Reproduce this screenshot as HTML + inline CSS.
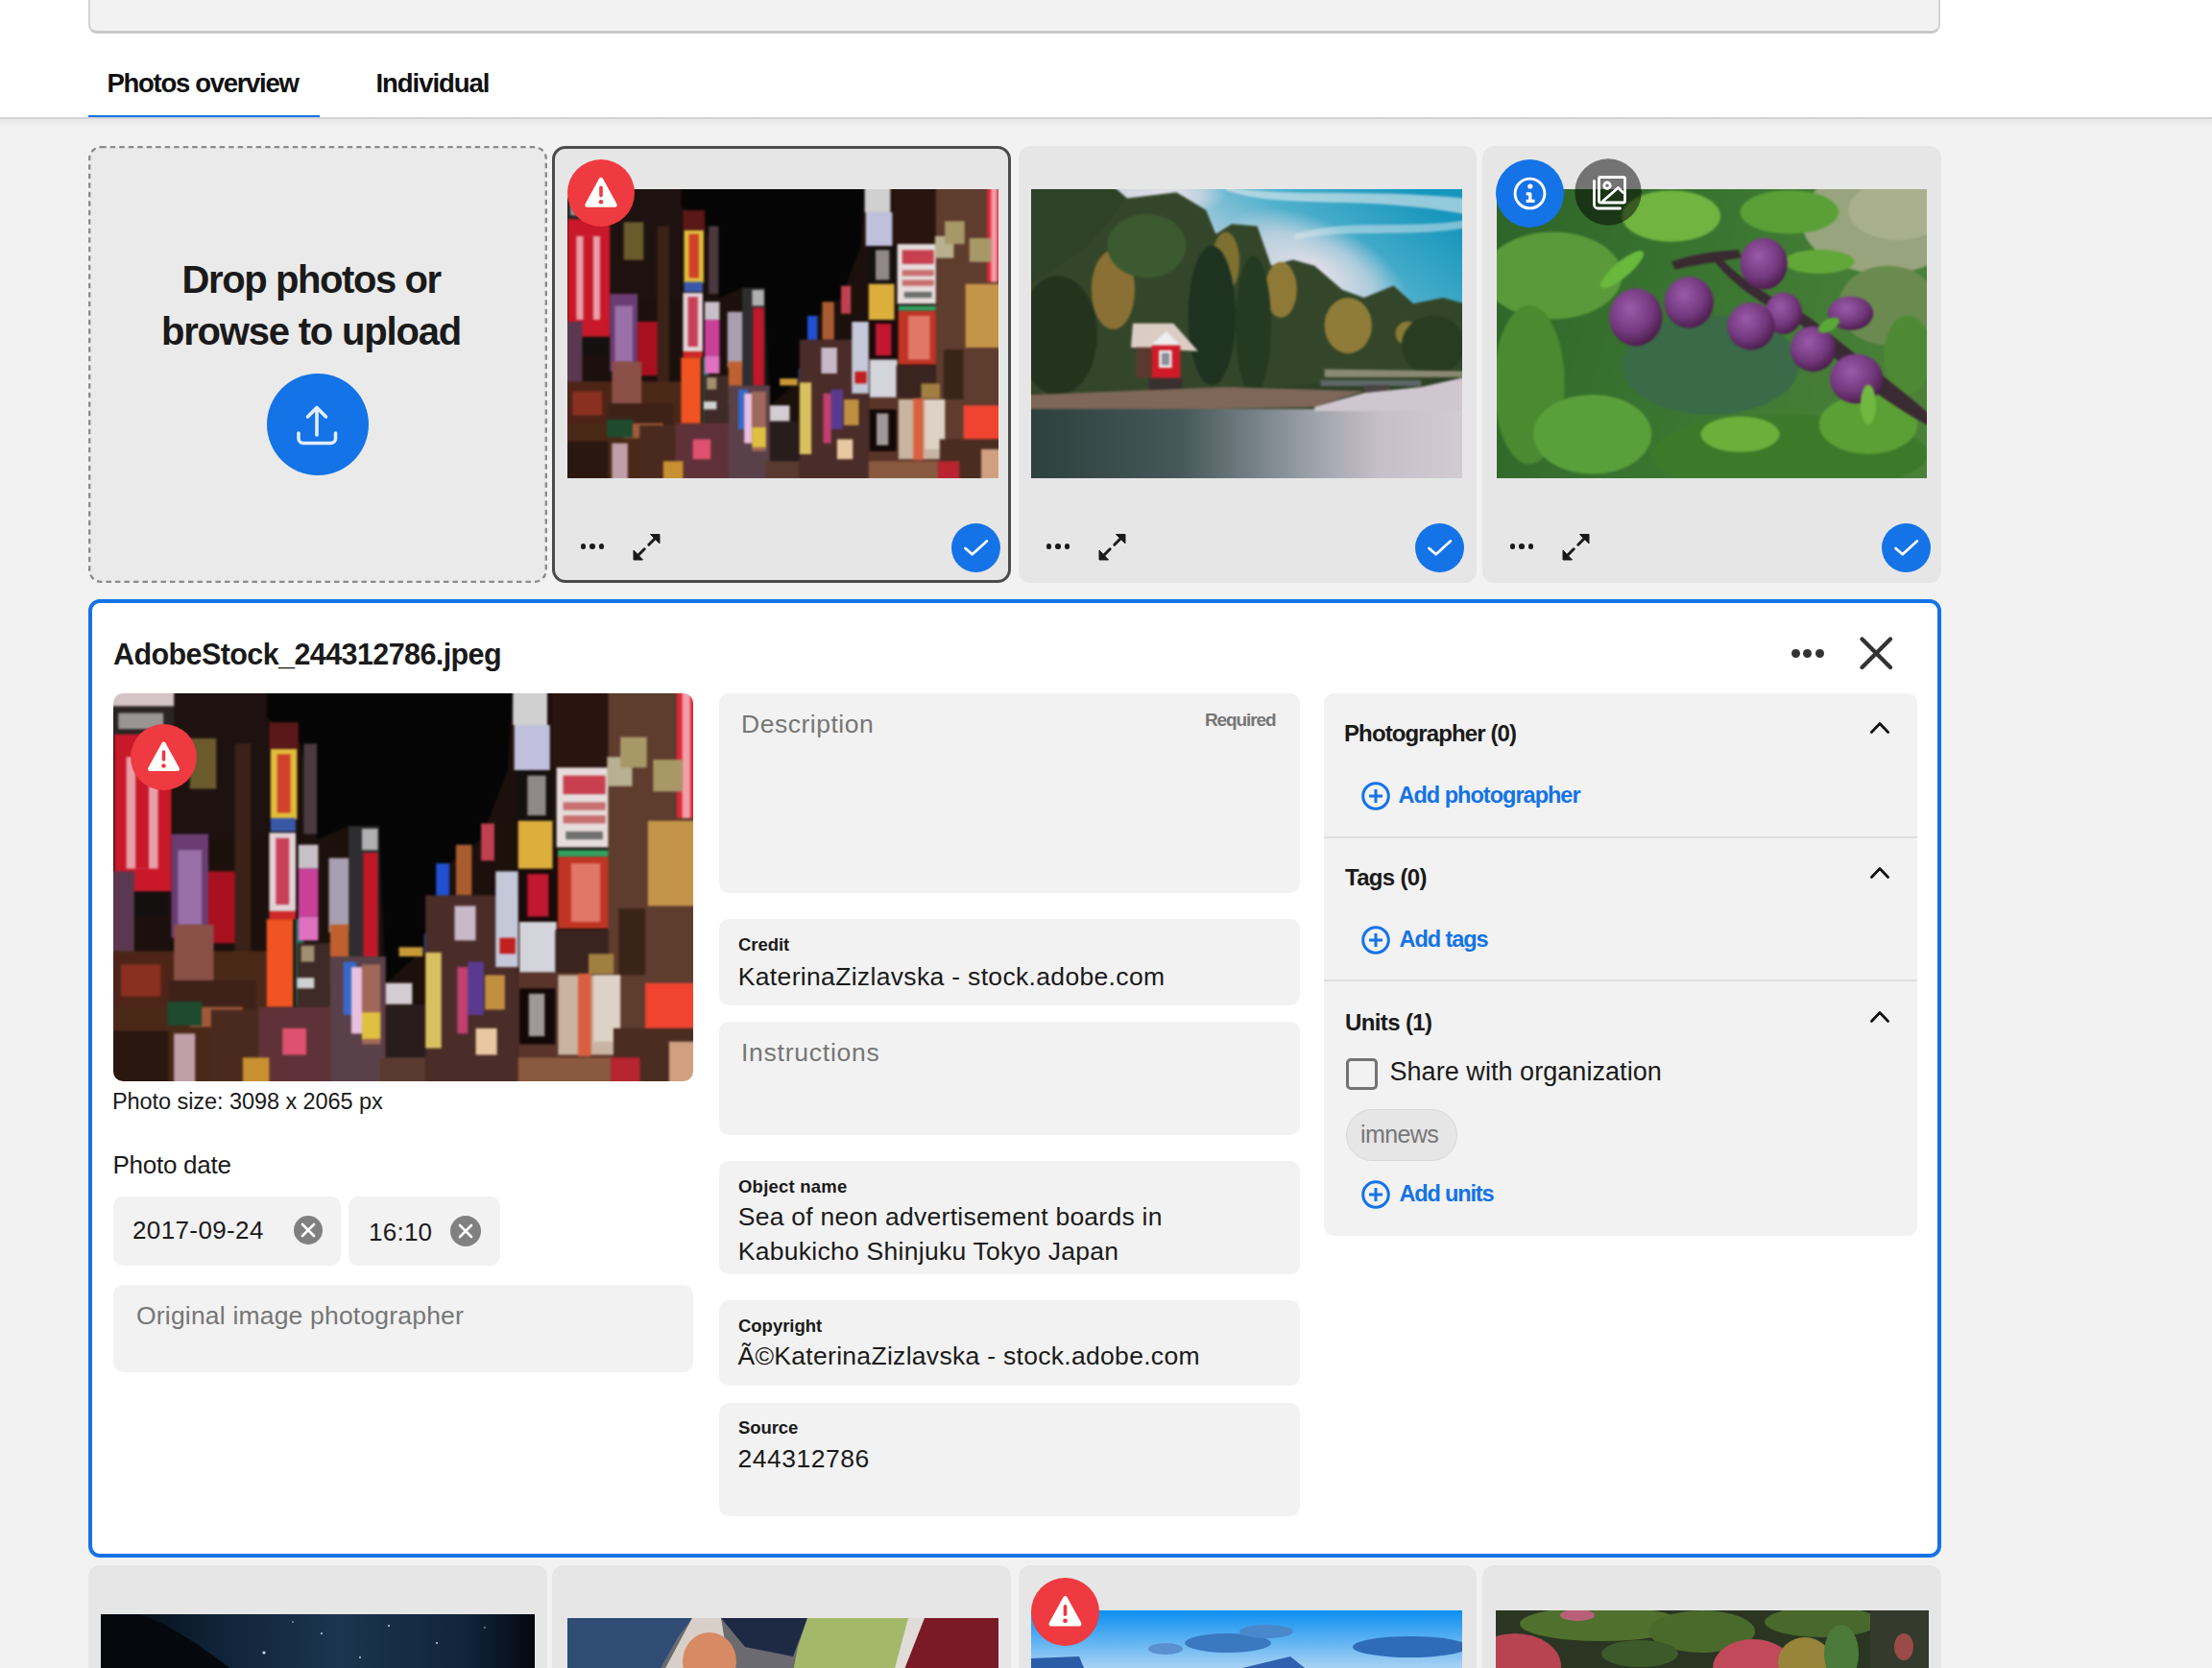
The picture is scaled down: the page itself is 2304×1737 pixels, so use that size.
<!DOCTYPE html>
<html>
<head>
<meta charset="utf-8">
<style>
html,body{margin:0;padding:0}
body{width:2304px;height:1737px;overflow:hidden;position:relative;background:#f2f2f2;font-family:"Liberation Sans",sans-serif;color:#1a1a1a}
.a{position:absolute}
.t{position:absolute;line-height:1;white-space:nowrap}
svg{display:block}
.card{position:absolute;background:#e6e6e6;border-radius:12px;box-sizing:border-box}
.photo{position:absolute;overflow:hidden}
.circ{position:absolute;border-radius:50%}
.fld{position:absolute;background:#f2f2f2}
</style>
</head>
<body>
<svg width="0" height="0" style="position:absolute"><defs>
<g id="tokyo">
<rect width="2212" height="1480" fill="#1c100c"/>
<polygon points="590,0 1520,0 1500,300 1400,560 1280,650 1200,960 1040,1100 1015,520 900,510 780,560 720,200 590,100" fill="#050505"/>
<rect x="240" y="0" width="350" height="560" fill="#1e1210"/>
<rect x="0" y="0" width="240" height="60" fill="#d4c4c6"/>
<rect x="0" y="60" width="240" height="110" fill="#2c2424"/>
<rect x="30" y="85" width="170" height="60" fill="#9a9494"/>
<rect x="15" y="165" width="215" height="590" fill="#c8182a"/>
<rect x="60" y="250" width="120" height="420" fill="#e8a0a8"/>
<rect x="95" y="250" width="50" height="420" fill="#c8182a"/>
<rect x="85" y="760" width="130" height="90" fill="#141010"/>
<rect x="0" y="680" width="90" height="330" fill="#5a3850"/>
<rect x="230" y="540" width="140" height="390" fill="#6a3c72"/>
<rect x="255" y="600" width="90" height="280" fill="#9a70a8"/>
<rect x="370" y="680" width="125" height="270" fill="#a81020"/>
<rect x="300" y="180" width="100" height="190" fill="#6a5a2c"/>
<rect x="470" y="200" width="60" height="800" fill="#3a2218"/>
<rect x="0" y="980" width="590" height="500" fill="#4a2818"/>
<rect x="0" y="990" width="235" height="200" fill="#4e2418"/><rect x="40" y="1030" width="150" height="120" fill="#8a3020"/>
<rect x="240" y="880" width="150" height="210" fill="#8a5048"/>
<rect x="220" y="1090" width="330" height="125" fill="#3e2218"/><rect x="300" y="1190" width="200" height="75" fill="#a05a3a"/>
<rect x="215" y="1170" width="130" height="90" fill="#1e4a2e"/>
<rect x="0" y="1280" width="220" height="200" fill="#2a1810"/>
<rect x="240" y="1290" width="80" height="190" fill="#c0a0a8"/>
<rect x="380" y="1200" width="180" height="280" fill="#4a2a1e"/>
<rect x="605" y="220" width="100" height="265" fill="#e0bc3a"/>
<rect x="630" y="240" width="50" height="220" fill="#d0402a"/>
<rect x="605" y="480" width="95" height="50" fill="#3a58a8"/>
<rect x="600" y="535" width="100" height="295" fill="#e2d2d6"/>
<rect x="625" y="555" width="50" height="250" fill="#c84058"/>
<rect x="600" y="830" width="100" height="30" fill="#d02828"/>
<rect x="590" y="860" width="100" height="330" fill="#f05422"/>
<rect x="700" y="860" width="30" height="330" fill="#207060"/>
<rect x="600" y="120" width="110" height="100" fill="#5a1818"/>
<rect x="710" y="580" width="75" height="90" fill="#c8c0c8"/>
<rect x="710" y="670" width="75" height="180" fill="#c84098"/>
<rect x="710" y="850" width="75" height="90" fill="#e070c0"/>
<rect x="730" y="200" width="50" height="340" fill="#4a3a40"/>
<rect x="705" y="950" width="125" height="250" fill="#3e2a26"/><rect x="705" y="1080" width="65" height="40" fill="#d0d0d0"/><rect x="720" y="960" width="50" height="60" fill="#a09070"/>
<rect x="560" y="1190" width="280" height="290" fill="#5e3238"/>
<rect x="650" y="1270" width="90" height="100" fill="#e05070"/>
<rect x="500" y="1380" width="100" height="100" fill="#c89030"/>
<rect x="825" y="630" width="85" height="280" fill="#a8a0b0"/>
<rect x="900" y="510" width="115" height="520" fill="#2e2e30"/>
<rect x="955" y="610" width="55" height="390" fill="#c01828"/>
<rect x="950" y="520" width="60" height="80" fill="#b0b0b0"/>
<rect x="830" y="880" width="70" height="220" fill="#c06030"/>
<rect x="830" y="1000" width="210" height="480" fill="#5a4048"/>
<rect x="880" y="1020" width="50" height="200" fill="#3868c8"/>
<rect x="910" y="1040" width="40" height="250" fill="#e8c0e0"/>
<rect x="950" y="1030" width="70" height="300" fill="#a06858"/>
<rect x="950" y="1210" width="70" height="100" fill="#e0c040"/>
<rect x="1040" y="1100" width="100" height="80" fill="#d4ccd0"/>
<rect x="1040" y="1180" width="150" height="300" fill="#281c1c"/>
<rect x="1020" y="1380" width="170" height="100" fill="#5a3a30"/>
<rect x="1090" y="965" width="90" height="35" fill="#c89838"/>
<rect x="1185" y="915" width="50" height="70" fill="#2e4e90"/>
<rect x="1230" y="650" width="50" height="220" fill="#2050d0"/>
<rect x="1305" y="580" width="60" height="190" fill="#a85c30"/>
<rect x="1400" y="500" width="50" height="140" fill="#c04050"/>
<rect x="1190" y="770" width="350" height="710" fill="#4a2c28"/>
<rect x="1190" y="985" width="60" height="360" fill="#d8c060"/>
<rect x="1300" y="810" width="80" height="130" fill="#c8b8c8"/>
<rect x="1350" y="1020" width="60" height="200" fill="#5a3a90"/>
<rect x="1310" y="1040" width="40" height="250" fill="#c04070"/>
<rect x="1415" y="1070" width="75" height="130" fill="#c09040"/>
<rect x="1380" y="1270" width="80" height="100" fill="#e8c8a0"/>
<rect x="1455" y="680" width="85" height="360" fill="#c4c8d8"/>
<rect x="1470" y="930" width="60" height="60" fill="#c02020"/>
<rect x="1520" y="0" width="130" height="130" fill="#d0d0d0"/>
<rect x="1525" y="130" width="135" height="170" fill="#c0c0dc"/>
<rect x="1530" y="300" width="140" height="190" fill="#141010"/>
<rect x="1575" y="320" width="70" height="150" fill="#908888"/>
<rect x="1540" y="490" width="130" height="180" fill="#dcae3c"/>
<rect x="1545" y="675" width="135" height="195" fill="#1a0a0a"/>
<rect x="1575" y="690" width="80" height="160" fill="#c01830"/>
<rect x="1545" y="870" width="140" height="190" fill="#d4d4dc"/>
<rect x="1670" y="0" width="210" height="290" fill="#2a1410"/>
<rect x="1685" y="290" width="205" height="300" fill="#e6dcdc"/>
<rect x="1710" y="320" width="160" height="70" fill="#c84050"/><rect x="1710" y="420" width="160" height="30" fill="#c87070"/><rect x="1710" y="470" width="160" height="30" fill="#c87070"/><rect x="1720" y="530" width="140" height="30" fill="#707070"/>
<rect x="1690" y="600" width="205" height="25" fill="#30a060"/>
<rect x="1690" y="625" width="215" height="270" fill="#c03424"/>
<rect x="1740" y="650" width="110" height="220" fill="#e07868"/>
<rect x="1880" y="0" width="332" height="1480" fill="#5e3c2e"/>
<rect x="2140" y="0" width="72" height="480" fill="#e02838"/>
<rect x="2160" y="0" width="30" height="480" fill="#f0a0a8"/>
<rect x="1876" y="250" width="95" height="110" fill="#b8b090"/><rect x="1926" y="175" width="100" height="115" fill="#a89868"/>
<rect x="2050" y="260" width="110" height="120" fill="#a89868"/>
<rect x="2030" y="490" width="182" height="320" fill="#c49448"/>
<rect x="1920" y="820" width="100" height="250" fill="#3a2418"/>
<rect x="1680" y="900" width="200" height="160" fill="#3a2420"/>
<rect x="1540" y="1060" width="380" height="420" fill="#5a3428"/>
<rect x="1545" y="1120" width="135" height="210" fill="#120808"/>
<rect x="1580" y="1140" width="60" height="160" fill="#a09898"/>
<rect x="1691" y="1070" width="235" height="300" fill="#c8b4a0"/><rect x="1766" y="1065" width="50" height="310" fill="#d86040"/><rect x="1826" y="1070" width="100" height="250" fill="#ddd2c6"/>
<rect x="1806" y="990" width="95" height="75" fill="#a08040"/>
<rect x="2020" y="1100" width="192" height="170" fill="#f04430"/>
<rect x="1900" y="1270" width="312" height="210" fill="#4a2c20"/>
<rect x="1890" y="1380" width="110" height="100" fill="#b82430"/>
<rect x="2110" y="1320" width="102" height="160" fill="#d0a080"/>
<rect x="1540" y="1380" width="350" height="100" fill="#8a5a40"/>
</g>
<g id="lake">
<defs>
<linearGradient id="lsky" x1="1" y1="0.35" x2="0.3" y2="0.6">
<stop offset="0" stop-color="#1696bd"/><stop offset="0.45" stop-color="#4fb0cc"/><stop offset="1" stop-color="#eadfe8"/>
</linearGradient>
<linearGradient id="lwat" x1="0" y1="0" x2="1" y2="0">
<stop offset="0" stop-color="#2c403c"/><stop offset="0.35" stop-color="#46585a"/><stop offset="0.65" stop-color="#9ca2aa"/><stop offset="0.8" stop-color="#c6bec8"/><stop offset="1" stop-color="#d4ccd4"/>
</linearGradient>
<radialGradient id="lpink" cx="0.5" cy="0.5" r="0.5"><stop offset="0" stop-color="#ece2ea" stop-opacity="0.95"/><stop offset="0.6" stop-color="#e6dde6" stop-opacity="0.6"/><stop offset="1" stop-color="#e6dde6" stop-opacity="0"/></radialGradient>
</defs>
<rect width="2212" height="1483" fill="#2e4026"/>
<rect width="2212" height="620" fill="url(#lsky)"/>
<ellipse cx="1450" cy="430" rx="520" ry="260" fill="url(#lpink)" transform="rotate(25 1450 430)"/>
<ellipse cx="700" cy="40" rx="300" ry="120" fill="url(#lpink)"/>
<path d="M1000,20 C1300,120 1700,40 2212,140 L2212,60 C1700,10 1300,60 1000,0Z" fill="#e8ecf0" opacity="0.6"/>
<path d="M1350,240 C1600,160 1900,220 2212,170 L2212,210 C1900,260 1600,210 1350,270Z" fill="#e0eaf0" opacity="0.5"/>
<polygon points="0,0 430,0 500,60 750,30 900,120 950,240 1030,190 1160,200 1230,400 1340,370 1450,400 1590,520 1700,560 1850,500 1950,590 2100,560 2212,590 2212,960 0,1060" fill="#34462a"/>
<polygon points="0,0 430,0 500,60 300,300 0,500" fill="#2e4228"/>
<ellipse cx="430" cy="520" rx="110" ry="200" fill="#8a7034"/>
<ellipse cx="1000" cy="380" rx="70" ry="150" fill="#7e7030"/>
<ellipse cx="1280" cy="520" rx="80" ry="140" fill="#8e7a36"/>
<ellipse cx="1620" cy="700" rx="120" ry="140" fill="#8e7c38"/>
<ellipse cx="1920" cy="740" rx="60" ry="60" fill="#8a7a34"/>
<ellipse cx="600" cy="300" rx="200" ry="160" fill="#3c5a30"/>
<ellipse cx="150" cy="750" rx="200" ry="300" fill="#22341e"/>
<ellipse cx="930" cy="650" rx="120" ry="350" fill="#1e3220"/>
<ellipse cx="1140" cy="700" rx="90" ry="350" fill="#243a22"/>
<ellipse cx="2050" cy="800" rx="160" ry="150" fill="#283c22"/>
<polygon points="1500,920 2212,930 2212,960 1500,960" fill="#8a8a72"/>
<polygon points="530,690 735,690 860,830 520,810" fill="#dccdc4"/>
<polygon points="620,800 700,730 770,800" fill="#eeeeee"/>
<rect x="545" y="810" width="80" height="155" fill="#5a3a30"/>
<rect x="625" y="800" width="145" height="165" fill="#d01a28"/>
<rect x="662" y="825" width="65" height="88" fill="#f0f0f0"/>
<rect x="675" y="838" width="40" height="62" fill="#8a9098"/>
<rect x="610" y="965" width="170" height="70" fill="#3a3030"/>
<polygon points="0,1050 1000,1010 1700,1030 1450,1110 0,1140" fill="#7e6658"/>
<rect x="1480" y="975" width="510" height="30" fill="#5e6668"/>
<rect x="1700" y="1000" width="130" height="50" fill="#4a4444"/>
<rect x="0" y="1120" width="2212" height="363" fill="url(#lwat)"/>
<polygon points="1450,1110 1700,1040 1990,1010 2212,960 2212,1130 1450,1130" fill="#cfc6d0"/>
</g>
<g id="plum">
<defs>
<radialGradient id="pg" cx="0.4" cy="0.35" r="0.7"><stop offset="0" stop-color="#9a5aa8"/><stop offset="0.6" stop-color="#73387e"/><stop offset="1" stop-color="#461a44"/></radialGradient>
<linearGradient id="pbg" x1="0" y1="0" x2="1" y2="0.2"><stop offset="0" stop-color="#2e6428"/><stop offset="0.6" stop-color="#3c7832"/><stop offset="1" stop-color="#4a8038"/></linearGradient>
</defs>
<rect width="2212" height="1486" fill="url(#pbg)"/>
<ellipse cx="1980" cy="170" rx="420" ry="270" fill="#98a47e"/><ellipse cx="2050" cy="120" rx="250" ry="150" fill="#aab08e"/>
<ellipse cx="2000" cy="600" rx="250" ry="200" fill="#6a8a50"/>
<ellipse cx="300" cy="450" rx="350" ry="220" fill="#5a9a3a"/>
<ellipse cx="180" cy="1000" rx="180" ry="400" fill="#4a8a30"/>
<ellipse cx="1100" cy="900" rx="450" ry="250" fill="#3a6a48"/>
<ellipse cx="1500" cy="1350" rx="700" ry="200" fill="#3c7a2a"/>
<ellipse cx="500" cy="1250" rx="300" ry="200" fill="#5aa03a"/>
<ellipse cx="900" cy="150" rx="250" ry="130" fill="#72b440"/>
<ellipse cx="1500" cy="130" rx="250" ry="110" fill="#5aa036"/>
<ellipse cx="1650" cy="380" rx="180" ry="60" fill="#62a838"/>
<ellipse cx="1900" cy="1200" rx="250" ry="150" fill="#5aa034"/><ellipse cx="1250" cy="1250" rx="200" ry="90" fill="#6ab03a"/><ellipse cx="2100" cy="850" rx="120" ry="200" fill="#4e8a34"/>
<path d="M900,380 C1050,330 1150,330 1240,320 L1260,360 C1150,380 1050,390 920,420Z" fill="#3a2a30"/>
<path d="M1150,360 C1300,520 1500,600 1600,660 C1900,900 2100,1050 2212,1150 L2212,1210 C2000,1100 1800,950 1560,700 C1450,640 1250,540 1120,380Z" fill="#3a2a34"/>
<ellipse cx="720" cy="660" rx="135" ry="145" fill="url(#pg)"/>
<ellipse cx="990" cy="585" rx="125" ry="130" fill="url(#pg)"/>
<ellipse cx="1370" cy="390" rx="120" ry="130" fill="url(#pg)"/>
<ellipse cx="1470" cy="640" rx="95" ry="105" fill="url(#pg)"/>
<ellipse cx="1305" cy="705" rx="120" ry="120" fill="url(#pg)"/>
<ellipse cx="1620" cy="820" rx="115" ry="115" fill="url(#pg)"/>
<ellipse cx="1810" cy="640" rx="115" ry="85" fill="url(#pg)"/>
<ellipse cx="1840" cy="970" rx="135" ry="125" fill="url(#pg)"/>
<ellipse cx="1700" cy="700" rx="60" ry="30" fill="#5aa838" transform="rotate(-30 1700 700)"/>
<ellipse cx="650" cy="420" rx="140" ry="40" fill="#6ab83c" transform="rotate(-40 650 420)"/>
<ellipse cx="1900" cy="1100" rx="40" ry="100" fill="#70b840"/>
</g>

</defs></svg>
<div class="a" style="left:0;top:0;width:2304px;height:122px;background:#fff;border-bottom:2px solid #d3d3d3"></div>
<div class="a" style="left:0;top:124px;width:2304px;height:8px;background:linear-gradient(#e8e8e8,#f2f2f2)"></div>
<div class="a" style="left:92px;top:-12px;width:1925px;height:44px;background:#f2f2f2;border:2px solid #d2d2d2;border-top:0;border-bottom:3px solid #c8c8c8;border-radius:0 0 9px 9px"></div>
<div class="t" style="left:111.5px;top:73.02px;font-size:27.5px;font-weight:700;color:#111;letter-spacing:-1.3px;">Photos overview</div>
<div class="t" style="left:391.5px;top:73.02px;font-size:27.5px;font-weight:700;color:#111;letter-spacing:-1.05px;">Individual</div>
<div class="a" style="left:92px;top:120px;width:241px;height:2px;background:#1473e6"></div>
<svg class="a" style="left:92px;top:152px" width="478" height="455"><rect x="1.2" y="1.2" width="475.6" height="452.6" rx="12" ry="12" fill="#eaeaea" stroke="#8a8a8a" stroke-width="2.3" stroke-dasharray="5.5 4"/></svg>
<div class="t" style="left:189.5px;top:270.64px;font-size:40px;font-weight:700;color:#1a1a1a;letter-spacing:-1.4px;">Drop photos or</div>
<div class="t" style="left:168px;top:325.14px;font-size:40px;font-weight:700;color:#1a1a1a;letter-spacing:-1.2px;">browse to upload</div>
<div class="circ" style="left:278px;top:389px;width:106px;height:106px;background:#1473e6"></div>
<svg class="a" style="left:278px;top:389px" width="106" height="106" viewBox="278 389 106 106"><g fill="none" stroke="#e3edfc" stroke-width="3.6" stroke-linecap="round" stroke-linejoin="round"><path d="M330 425V453M320.5 434L330 424.5L339.5 434"/><path d="M311 451V456.5a5 5 0 0 0 5 5H344.5a5 5 0 0 0 5-5V451"/></g></svg>
<div class="card" style="left:575px;top:152px;width:478px;height:455px;border:3px solid #4b4b4b;border-radius:14px"></div>
<div class="card" style="left:1061px;top:152px;width:477px;height:455px"></div>
<div class="card" style="left:1544px;top:152px;width:478px;height:455px"></div>
<div class="photo" style="left:591px;top:197px;width:449px;height:301px;"><svg style="position:absolute;left:-3px;top:-3px;filter:blur(1.1px)" width="455" height="307" viewBox="0 0 2212 1480" preserveAspectRatio="none"><use href="#tokyo"/></svg></div>
<div class="photo" style="left:1074px;top:197px;width:449px;height:301px;"><svg style="position:absolute;left:-3px;top:-3px;filter:blur(1.1px)" width="455" height="307" viewBox="0 0 2212 1483" preserveAspectRatio="none"><use href="#lake"/></svg></div>
<div class="photo" style="left:1559px;top:197px;width:448px;height:301px;"><svg style="position:absolute;left:-3px;top:-3px;filter:blur(1.1px)" width="454" height="307" viewBox="0 0 2212 1486" preserveAspectRatio="none"><use href="#plum"/></svg></div>
<svg class="a" style="left:590.5px;top:166.0px" width="70" height="70" viewBox="-35 -35 70 70"><circle r="35" fill="#ee3a40"/><path d="M0,-14 L14.5,12.5 L-14.5,12.5Z" fill="#fff" stroke="#fff" stroke-width="4.5" stroke-linejoin="round"/><path d="M0,-5.6 V2.6" stroke="#ee3a40" stroke-width="3.6" stroke-linecap="round"/><circle cx="0" cy="9.2" r="2.3" fill="#ee3a40"/></svg>
<svg class="a" style="left:1557.5px;top:165.5px" width="71" height="71" viewBox="-35.5 -35.5 71 71"><circle r="35.5" fill="#1473e6"/><circle r="15.4" fill="none" stroke="#fff" stroke-width="2.9"/><circle cx="0.3" cy="-7.5" r="2.6" fill="#fff"/><path d="M-3.8,0.3 H0.3 V7.8 M-3.8,7.8 H5.0" fill="none" stroke="#fff" stroke-width="3.3" stroke-linejoin="round"/></svg>
<svg class="a" style="left:1640px;top:165px" width="70" height="70" viewBox="-35 -35 70 70"><circle r="34.7" fill="rgba(0,0,0,0.5)"/><g fill="none" stroke="#fff" stroke-width="2.8" stroke-linecap="round" stroke-linejoin="round"><rect x="-9.5" y="-15.5" width="27" height="26.5" rx="1.8"/><path d="M-14.5,-11.5 V13 a4,4 0 0 0 4,4 H12.5"/><path d="M-5.5,9.5 L10.5,-4.5 L15.5,0.5"/><circle cx="-1" cy="-6.8" r="3.2"/></g></svg>
<div class="circ" style="left:604.7px;top:566.2px;width:5.6px;height:5.6px;background:#1a1a1a"></div>
<div class="circ" style="left:614.1px;top:566.2px;width:5.6px;height:5.6px;background:#1a1a1a"></div>
<div class="circ" style="left:623.5px;top:566.2px;width:5.6px;height:5.6px;background:#1a1a1a"></div>
<svg class="a" style="left:659px;top:555px" width="30" height="30" viewBox="-1 -1 30 30"><path d="M17.5,0.5 H27 V10 Z M0,17 V27 H9.5 Z" fill="#1a1a1a" stroke="#1a1a1a" stroke-width="1" stroke-linejoin="round"/><path d="M15.8,11.2 L22,5 M11.2,15.8 L5,22" stroke="#1a1a1a" stroke-width="3" stroke-linecap="round"/></svg>
<div class="circ" style="left:1089.7px;top:566.2px;width:5.6px;height:5.6px;background:#1a1a1a"></div>
<div class="circ" style="left:1099.1000000000001px;top:566.2px;width:5.6px;height:5.6px;background:#1a1a1a"></div>
<div class="circ" style="left:1108.5px;top:566.2px;width:5.6px;height:5.6px;background:#1a1a1a"></div>
<svg class="a" style="left:1144px;top:555px" width="30" height="30" viewBox="-1 -1 30 30"><path d="M17.5,0.5 H27 V10 Z M0,17 V27 H9.5 Z" fill="#1a1a1a" stroke="#1a1a1a" stroke-width="1" stroke-linejoin="round"/><path d="M15.8,11.2 L22,5 M11.2,15.8 L5,22" stroke="#1a1a1a" stroke-width="3" stroke-linecap="round"/></svg>
<div class="circ" style="left:1572.7px;top:566.2px;width:5.6px;height:5.6px;background:#1a1a1a"></div>
<div class="circ" style="left:1582.1000000000001px;top:566.2px;width:5.6px;height:5.6px;background:#1a1a1a"></div>
<div class="circ" style="left:1591.5px;top:566.2px;width:5.6px;height:5.6px;background:#1a1a1a"></div>
<svg class="a" style="left:1627px;top:555px" width="30" height="30" viewBox="-1 -1 30 30"><path d="M17.5,0.5 H27 V10 Z M0,17 V27 H9.5 Z" fill="#1a1a1a" stroke="#1a1a1a" stroke-width="1" stroke-linejoin="round"/><path d="M15.8,11.2 L22,5 M11.2,15.8 L5,22" stroke="#1a1a1a" stroke-width="3" stroke-linecap="round"/></svg>
<svg class="a" style="left:991.0px;top:544.9px" width="51" height="51" viewBox="-25.5 -25.5 51 51"><circle r="25.5" fill="#1473e6"/><path d="M-11,0.5 L-3.8,6.8 L11.3,-7" fill="none" stroke="#fff" stroke-width="2.8" stroke-linecap="round" stroke-linejoin="round"/></svg>
<svg class="a" style="left:1474.0px;top:544.9px" width="51" height="51" viewBox="-25.5 -25.5 51 51"><circle r="25.5" fill="#1473e6"/><path d="M-11,0.5 L-3.8,6.8 L11.3,-7" fill="none" stroke="#fff" stroke-width="2.8" stroke-linecap="round" stroke-linejoin="round"/></svg>
<svg class="a" style="left:1959.5px;top:544.9px" width="51" height="51" viewBox="-25.5 -25.5 51 51"><circle r="25.5" fill="#1473e6"/><path d="M-11,0.5 L-3.8,6.8 L11.3,-7" fill="none" stroke="#fff" stroke-width="2.8" stroke-linecap="round" stroke-linejoin="round"/></svg>
<div class="a" style="left:92px;top:624px;width:1930px;height:998px;box-sizing:border-box;border:4px solid #1473e6;border-radius:12px;background:#fff"></div>
<div class="t" style="left:118px;top:665.98px;font-size:30.5px;font-weight:700;color:#1a1a1a;letter-spacing:-0.59px;">AdobeStock_244312786.jpeg</div>
<div class="circ" style="left:1865.8px;top:675.8px;width:9px;height:9px;background:#333"></div>
<div class="circ" style="left:1878.0px;top:675.8px;width:9px;height:9px;background:#333"></div>
<div class="circ" style="left:1890.5px;top:675.8px;width:9px;height:9px;background:#333"></div>
<svg class="a" style="left:1930px;top:656px" width="48" height="48" viewBox="1930 656 48 48"><path d="M1939.5,665.5 L1969,695 M1969,665.5 L1939.5,695" stroke="#333" stroke-width="4.4" stroke-linecap="round"/></svg>
<div class="photo" style="left:118px;top:722px;width:604px;height:404px;border-radius:10px;"><svg style="position:absolute;left:-3px;top:-3px;filter:blur(1.1px)" width="610" height="410" viewBox="0 0 2212 1480" preserveAspectRatio="none"><use href="#tokyo"/></svg></div>
<svg class="a" style="left:135.7px;top:754.0px" width="69" height="69" viewBox="-35 -35 70 70"><circle r="35" fill="#ee3a40"/><path d="M0,-14 L14.5,12.5 L-14.5,12.5Z" fill="#fff" stroke="#fff" stroke-width="4.5" stroke-linejoin="round"/><path d="M0,-5.6 V2.6" stroke="#ee3a40" stroke-width="3.6" stroke-linecap="round"/><circle cx="0" cy="9.2" r="2.3" fill="#ee3a40"/></svg>
<div class="t" style="left:117px;top:1136.11px;font-size:23.5px;color:#1a1a1a;letter-spacing:-0.07px;">Photo size: 3098 x 2065 px</div>
<div class="t" style="left:117.5px;top:1199.99px;font-size:26px;color:#1a1a1a;letter-spacing:-0.26px;">Photo date</div>
<div class="fld" style="left:118px;top:1246px;width:237px;height:72px;border-radius:10px"></div>
<div class="fld" style="left:363px;top:1246px;width:158px;height:72px;border-radius:10px"></div>
<div class="t" style="left:138px;top:1267.69px;font-size:26px;color:#1a1a1a;letter-spacing:0.38px;">2017-09-24</div>
<svg class="a" style="left:306.0px;top:1266.0px" width="30" height="30" viewBox="-15.0 -15.0 30 30"><circle r="15.0" fill="#808080"/><path d="M-6,-6 L6,6 M6,-6 L-6,6" stroke="#fff" stroke-width="2.6" stroke-linecap="round"/></svg>
<div class="t" style="left:384px;top:1269.69px;font-size:26px;color:#1a1a1a;letter-spacing:0.25px;">16:10</div>
<svg class="a" style="left:469.0px;top:1266.0px" width="32" height="32" viewBox="-16.0 -16.0 32 32"><circle r="16.0" fill="#808080"/><path d="M-6,-6 L6,6 M6,-6 L-6,6" stroke="#fff" stroke-width="2.6" stroke-linecap="round"/></svg>
<div class="fld" style="left:118px;top:1338px;width:604px;height:91px;border-radius:10px"></div>
<div class="t" style="left:142px;top:1357.17px;font-size:26.5px;color:#767676;letter-spacing:0.19px;">Original image photographer</div>
<div class="fld" style="left:749px;top:722px;width:605px;height:208px;border-radius:10px"></div>
<div class="t" style="left:772px;top:741.27px;font-size:26.5px;color:#767676;letter-spacing:0.52px;">Description</div>
<div class="t" style="left:1255px;top:739.72px;font-size:19px;font-weight:700;color:#767676;letter-spacing:-1.11px;">Required</div>
<div class="fld" style="left:749px;top:957px;width:605px;height:90px;border-radius:10px"></div>
<div class="t" style="left:769px;top:975.04px;font-size:18.5px;font-weight:700;color:#1a1a1a;letter-spacing:-0.06px;">Credit</div>
<div class="t" style="left:768.8px;top:1003.77px;font-size:26.5px;color:#1a1a1a;letter-spacing:0.33px;">KaterinaZizlavska - stock.adobe.com</div>
<div class="fld" style="left:749px;top:1064px;width:605px;height:118px;border-radius:10px"></div>
<div class="t" style="left:772px;top:1082.77px;font-size:26.5px;color:#767676;letter-spacing:0.75px;">Instructions</div>
<div class="fld" style="left:749px;top:1209px;width:605px;height:118px;border-radius:10px"></div>
<div class="t" style="left:769px;top:1226.54px;font-size:18.5px;font-weight:700;color:#1a1a1a;letter-spacing:0.23px;">Object name</div>
<div class="t" style="left:768.8px;top:1254.07px;font-size:26.5px;color:#1a1a1a;letter-spacing:0.25px;">Sea of neon advertisement boards in</div>
<div class="t" style="left:768.8px;top:1290.07px;font-size:26.5px;color:#1a1a1a;letter-spacing:0.27px;">Kabukicho Shinjuku Tokyo Japan</div>
<div class="fld" style="left:749px;top:1354px;width:605px;height:89px;border-radius:10px"></div>
<div class="t" style="left:769px;top:1371.84px;font-size:18.5px;font-weight:700;color:#1a1a1a;letter-spacing:-0.02px;">Copyright</div>
<div class="t" style="left:768.5px;top:1398.57px;font-size:26.5px;color:#1a1a1a;letter-spacing:0.3px;">&Atilde;&copy;KaterinaZizlavska - stock.adobe.com</div>
<div class="fld" style="left:749px;top:1461px;width:605px;height:118px;border-radius:10px"></div>
<div class="t" style="left:769px;top:1478.34px;font-size:18.5px;font-weight:700;color:#1a1a1a;letter-spacing:-0.09px;">Source</div>
<div class="t" style="left:768.5px;top:1505.57px;font-size:26.5px;color:#1a1a1a;letter-spacing:0.51px;">244312786</div>
<div class="fld" style="left:1379px;top:722px;width:618px;height:565px;border-radius:10px"></div>
<div class="a" style="left:1379px;top:871px;width:618px;height:2px;background:#dedede"></div>
<div class="a" style="left:1379px;top:1020px;width:618px;height:2px;background:#dedede"></div>
<div class="t" style="left:1400px;top:752.48px;font-size:24px;font-weight:700;color:#1a1a1a;letter-spacing:-0.89px;">Photographer (0)</div>
<svg class="a" style="left:1946.3px;top:750px" width="24" height="16" viewBox="-12 -8 24 16"><path d="M-8.6,4.45 L0,-4.45 L8.6,4.45" fill="none" stroke="#111" stroke-width="2.7" stroke-linecap="round" stroke-linejoin="round"/></svg>
<svg class="a" style="left:1417px;top:813px" width="32" height="32" viewBox="-16 -16 32 32"><circle r="13.3" fill="none" stroke="#1473e6" stroke-width="3"/><path d="M-7,0 H7 M0,-7 V7" stroke="#1473e6" stroke-width="3"/></svg>
<div class="t" style="left:1456.5px;top:816.81px;font-size:23.5px;font-weight:700;color:#1473e6;letter-spacing:-0.99px;">Add photographer</div>
<div class="t" style="left:1401px;top:902.48px;font-size:24px;font-weight:700;color:#1a1a1a;letter-spacing:-0.68px;">Tags (0)</div>
<svg class="a" style="left:1946.3px;top:900.5px" width="24" height="16" viewBox="-12 -8 24 16"><path d="M-8.6,4.45 L0,-4.45 L8.6,4.45" fill="none" stroke="#111" stroke-width="2.7" stroke-linecap="round" stroke-linejoin="round"/></svg>
<svg class="a" style="left:1417px;top:963px" width="32" height="32" viewBox="-16 -16 32 32"><circle r="13.3" fill="none" stroke="#1473e6" stroke-width="3"/><path d="M-7,0 H7 M0,-7 V7" stroke="#1473e6" stroke-width="3"/></svg>
<div class="t" style="left:1457.5px;top:967.41px;font-size:23.5px;font-weight:700;color:#1473e6;letter-spacing:-1.07px;">Add tags</div>
<div class="t" style="left:1401px;top:1053.48px;font-size:24px;font-weight:700;color:#1a1a1a;letter-spacing:-0.63px;">Units (1)</div>
<svg class="a" style="left:1946.3px;top:1050.8px" width="24" height="16" viewBox="-12 -8 24 16"><path d="M-8.6,4.45 L0,-4.45 L8.6,4.45" fill="none" stroke="#111" stroke-width="2.7" stroke-linecap="round" stroke-linejoin="round"/></svg>
<div class="a" style="left:1401.5px;top:1102px;width:33px;height:33px;box-sizing:border-box;border:3px solid #737373;border-radius:5px"></div>
<div class="t" style="left:1447.5px;top:1103.34px;font-size:27px;color:#1a1a1a;letter-spacing:0.05px;">Share with organization</div>
<div class="a" style="left:1401.5px;top:1154.5px;width:116px;height:54px;box-sizing:border-box;border:1.5px solid #d8d8d8;border-radius:27px;background:#e6e6e6"></div>
<div class="t" style="left:1417px;top:1168.64px;font-size:25px;color:#767676;letter-spacing:-0.59px;">imnews</div>
<svg class="a" style="left:1417px;top:1228.4px" width="32" height="32" viewBox="-16 -16 32 32"><circle r="13.3" fill="none" stroke="#1473e6" stroke-width="3"/><path d="M-7,0 H7 M0,-7 V7" stroke="#1473e6" stroke-width="3"/></svg>
<div class="t" style="left:1457.5px;top:1232.11px;font-size:23.5px;font-weight:700;color:#1473e6;letter-spacing:-1.16px;">Add units</div>
<div class="card" style="left:92px;top:1630px;width:478px;height:200px"></div>
<div class="card" style="left:575px;top:1630px;width:478px;height:200px"></div>
<div class="card" style="left:1061px;top:1630px;width:477px;height:200px"></div>
<div class="card" style="left:1544px;top:1630px;width:478px;height:200px"></div>
<svg class="a" style="left:105px;top:1681px" width="452" height="60" viewBox="0 0 452 60" preserveAspectRatio="none"><defs><linearGradient id="st" x1="0" x2="1"><stop offset="0" stop-color="#03070c"/><stop offset="0.25" stop-color="#0f2236"/><stop offset="0.55" stop-color="#1c3450"/><stop offset="0.85" stop-color="#10233a"/><stop offset="1" stop-color="#040810"/></linearGradient></defs><rect width="452" height="60" fill="url(#st)"/><path d="M0,0 H40 C70,10 100,30 140,60 H0Z" fill="#05090e"/><g fill="#cfd8e8"><circle cx="170" cy="40" r="1.6"/><circle cx="230" cy="20" r="1"/><circle cx="300" cy="12" r="1"/><circle cx="350" cy="30" r="1"/><circle cx="200" cy="8" r="0.8"/><circle cx="270" cy="45" r="0.9"/><circle cx="400" cy="14" r="0.8"/></g></svg>
<svg class="a" style="left:591px;top:1685px" width="449" height="56" viewBox="0 0 449 56" preserveAspectRatio="none"><rect width="449" height="56" fill="#6a6a70"/><polygon points="0,0 130,0 115,20 95,56 0,56" fill="#2e4c74"/><polygon points="130,0 160,0 165,30 125,56 100,56" fill="#d8d0c8"/><ellipse cx="148" cy="45" rx="28" ry="30" fill="#d88a64"/><polygon points="160,0 250,0 235,40 185,30" fill="#1e2a44"/><polygon points="250,0 360,0 350,56 235,56 240,30" fill="#a4b86a"/><polygon points="360,0 449,0 449,56 345,56" fill="#7a1a26"/><polygon points="355,0 372,0 350,56 340,56" fill="#e0dcd8"/></svg>
<svg class="a" style="left:1074px;top:1677px" width="449" height="60" viewBox="0 0 449 60" preserveAspectRatio="none"><defs><linearGradient id="sk" x1="0" y1="0" x2="0" y2="1"><stop offset="0" stop-color="#0b8ff0"/><stop offset="1" stop-color="#a8d2f4"/></linearGradient></defs><rect width="449" height="60" fill="url(#sk)"/><ellipse cx="205" cy="34" rx="45" ry="10" fill="#3a78c0"/><ellipse cx="245" cy="22" rx="28" ry="7" fill="#4a88cc"/><ellipse cx="395" cy="38" rx="60" ry="11" fill="#2e6cb8"/><ellipse cx="140" cy="40" rx="18" ry="6" fill="#5a90d0"/><polygon points="0,50 50,48 55,60 0,60" fill="#2a5ca8"/><polygon points="220,60 270,48 285,60" fill="#3060b0"/></svg>
<svg class="a" style="left:1557.5px;top:1676.5px" width="451" height="61" viewBox="0 0 451 61" preserveAspectRatio="none"><rect width="451" height="61" fill="#2a3622"/><ellipse cx="110" cy="14" rx="85" ry="18" fill="#50702e"/><ellipse cx="215" cy="22" rx="55" ry="22" fill="#4a6a2c"/><ellipse cx="340" cy="12" rx="60" ry="16" fill="#48682c"/><ellipse cx="150" cy="45" rx="40" ry="14" fill="#3c5a2a"/><ellipse cx="20" cy="58" rx="48" ry="34" fill="#b84452"/><ellipse cx="268" cy="60" rx="42" ry="30" fill="#c04a5a"/><ellipse cx="322" cy="54" rx="28" ry="26" fill="#98843a"/><rect x="390" y="0" width="61" height="61" fill="#343a2c"/><ellipse cx="425" cy="38" rx="10" ry="14" fill="#9a4a48"/><ellipse cx="85" cy="5" rx="18" ry="6" fill="#b8607a"/><ellipse cx="360" cy="45" rx="18" ry="30" fill="#4c7a3a"/></svg>
<svg class="a" style="left:1074.0px;top:1643.1px" width="71" height="71" viewBox="-35 -35 70 70"><circle r="35" fill="#ee3a40"/><path d="M0,-14 L14.5,12.5 L-14.5,12.5Z" fill="#fff" stroke="#fff" stroke-width="4.5" stroke-linejoin="round"/><path d="M0,-5.6 V2.6" stroke="#ee3a40" stroke-width="3.6" stroke-linecap="round"/><circle cx="0" cy="9.2" r="2.3" fill="#ee3a40"/></svg>
</body>
</html>
